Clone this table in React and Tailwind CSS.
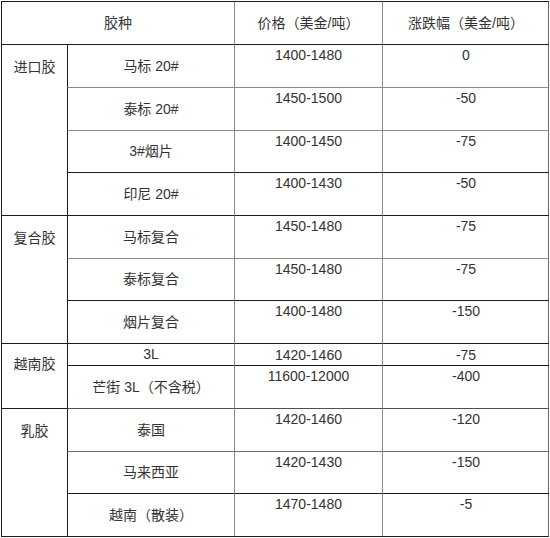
import React from 'react';

const K = 'border-[#1c1c1c]';
const G = 'border-[#8a8a8a]';

// row heights between the ruled lines
const rows = [
  { h: 'h-[43px]', line: K, name: '马标 20#', price: '1400-1480', diff: '0' },
  { h: 'h-[43px]', line: G, name: '泰标 20#', price: '1450-1500', diff: '-50' },
  { h: 'h-[42px]', line: G, name: '3#烟片', price: '1400-1450', diff: '-75' },
  { h: 'h-[43px]', line: K, name: '印尼 20#', price: '1400-1430', diff: '-50' },
  { h: 'h-[43px]', line: K, name: '马标复合', price: '1450-1480', diff: '-75' },
  { h: 'h-[42px]', line: G, name: '泰标复合', price: '1450-1480', diff: '-75' },
  { h: 'h-[43px]', line: K, name: '烟片复合', price: '1400-1480', diff: '-150' },
  { h: 'h-[22px]', line: K, name: '3L', price: '1420-1460', diff: '-75', tight: true },
  { h: 'h-[43px]', line: K, name: '芒街 3L（不含税）', price: '11600-12000', diff: '-400' },
  { h: 'h-[43px]', line: 'border-[#505050]', name: '泰国', price: '1420-1460', diff: '-120' },
  { h: 'h-[42px]', line: 'border-[#6a6a6a]', name: '马来西亚', price: '1420-1430', diff: '-150' },
  { h: 'h-[43px]', line: K, name: '越南（散装）', price: '1470-1480', diff: '-5' },
];

const groups = [
  { label: '进口胶', start: 2, span: 'row-span-4', row: 'row-start-2' },
  { label: '复合胶', start: 6, span: 'row-span-3', row: 'row-start-6' },
  { label: '越南胶', start: 9, span: 'row-span-2', row: 'row-start-9', pt: 'pt-[11px]' },
  { label: '乳胶', start: 11, span: 'row-span-3', row: 'row-start-11' },
];

export default function App() {
  return (
    <div className="bg-white w-[550px] h-[538px] pt-px pl-px text-[14px] text-[#333]"
      style={{ fontFamily: '"Liberation Sans", Arial, "Noto Sans CJK SC", sans-serif' }}>
      <div className="grid grid-cols-[66px_167px_148px_167px] grid-rows-[43px] w-[548px] border-r border-b border-r-[#6a6a6a] border-b-[#1c1c1c]">
        {/* header */}
        <div className="col-span-2 h-[43px] border-l border-t border-[#1c1c1c] flex items-center justify-center">胶种</div>
        <div className="h-[43px] border-l border-t border-l-[#8a8a8a] border-t-[#1c1c1c] flex items-center justify-center">价格（美金/吨）</div>
        <div className="h-[43px] border-l border-t border-l-[#8a8a8a] border-t-[#1c1c1c] flex items-center justify-center">涨跌幅（美金/吨）</div>

        {groups.map((g) => (
          <div key={g.label}
            className={`col-start-1 ${g.row} ${g.span} border-l border-t ${K} flex justify-center ${g.pt || 'pt-[13px]'} leading-[18px]`}>
            {g.label}
          </div>
        ))}

        {rows.map((r, i) => (
          <React.Fragment key={i}>
            <div className={`col-start-2 ${r.h} border-t ${r.line} border-l border-l-[#1c1c1c] flex items-center justify-center`}>
              {r.name}
            </div>
            <div className={`col-start-3 ${r.h} border-t ${r.line} border-l border-l-[#8a8a8a] flex justify-center ${r.tight ? 'items-center' : 'pt-[2px]'} leading-[16px]`}>
              {r.price}
            </div>
            <div className={`col-start-4 ${r.h} border-t ${r.line} border-l border-l-[#8a8a8a] flex justify-center ${r.tight ? 'items-center' : 'pt-[2px]'} leading-[16px]`}>
              {r.diff}
            </div>
          </React.Fragment>
        ))}
      </div>
    </div>
  );
}
